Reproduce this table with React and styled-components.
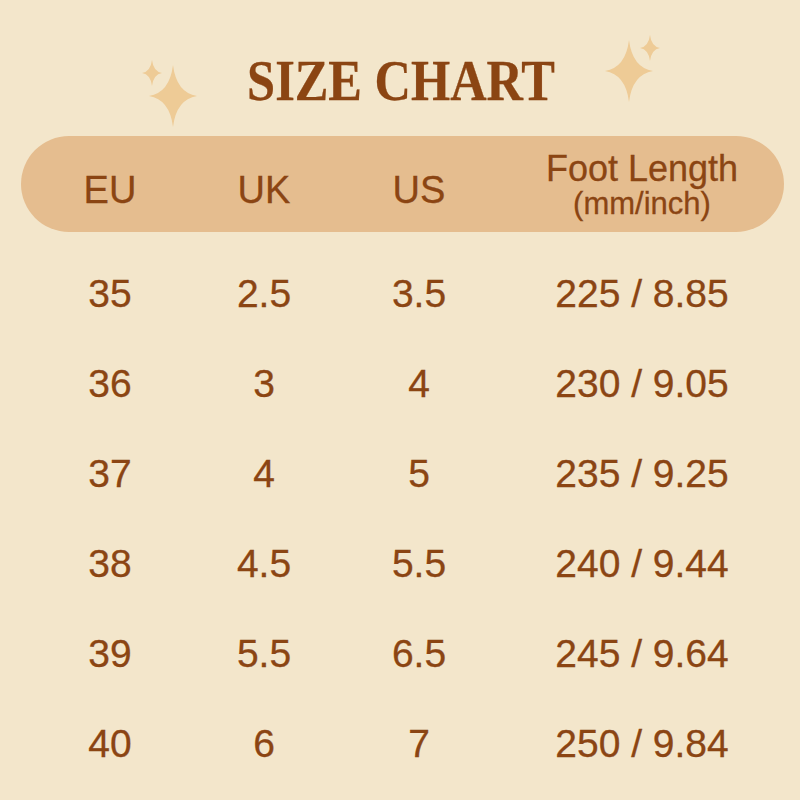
import React from "react";
import styled, { createGlobalStyle } from "styled-components";

const GlobalStyle = createGlobalStyle`
  body {
    margin: 0;
    background: #f3e6cb;
  }
`;

const sizes = [
  { eu: "35", uk: "2.5", us: "3.5", foot: "225 / 8.85" },
  { eu: "36", uk: "3", us: "4", foot: "230 / 9.05" },
  { eu: "37", uk: "4", us: "5", foot: "235 / 9.25" },
  { eu: "38", uk: "4.5", us: "5.5", foot: "240 / 9.44" },
  { eu: "39", uk: "5.5", us: "6.5", foot: "245 / 9.64" },
  { eu: "40", uk: "6", us: "7", foot: "250 / 9.84" },
];

const Page = styled.div`
  width: 800px;
  height: 800px;
  box-sizing: border-box;
  padding-top: 30px;
  background: #f3e6cb;
  color: #8b4513;
  font-family: "Liberation Sans", Arial, sans-serif;
  -webkit-text-stroke: 0.3px #8b4513;
  overflow: hidden;
`;

const TitleRow = styled.div`
  display: flex;
  height: 100px;
  padding-left: 130px;
`;

const Sparkles = styled.svg`
  width: 70px;
  height: 100px;
  flex: none;
`;

const TitleBox = styled.div`
  width: 400px;
  display: flex;
  justify-content: center;
  padding-top: 23px;
  padding-left: 2px;
  box-sizing: border-box;
`;

const Title = styled.h1`
  margin: 0;
  font-family: "Liberation Serif", "Times New Roman", serif;
  font-weight: 700;
  font-size: 56px;
  line-height: 56px;
  white-space: nowrap;
  transform: scaleX(0.9);
`;

const HeaderBar = styled.div`
  display: grid;
  grid-template-columns: 160px 148px 162px 284px;
  align-items: center;
  margin: 6px 16px 0 21px;
  padding-left: 9px;
  height: 96px;
  border-radius: 48px;
  background: #e5bd8f;
`;

const HeadLabel = styled.div`
  text-align: center;
  font-size: 38px;
  line-height: 38px;
  padding-top: 11px;
`;

const HeadStack = styled.div`
  display: flex;
  flex-direction: column;
  align-items: center;
  padding-top: 3px;
`;

const HeadLine = styled.span`
  font-size: ${(p) => p.$size}px;
  line-height: 35px;
  white-space: nowrap;
`;

const Rows = styled.div`
  margin-top: 16px;
  padding-left: 30px;
`;

const Row = styled.div`
  display: grid;
  grid-template-columns: 160px 148px 162px 284px;
  align-items: center;
  height: 90px;
`;

const Cell = styled.div`
  text-align: center;
  font-size: 39px;
  line-height: 39px;
  white-space: nowrap;
`;

const star = (cx, cy, a, b) => {
  const k = a * 0.14;
  return `M${cx} ${cy - b} Q${cx + k} ${cy - k} ${cx + a} ${cy} Q${cx + k} ${cy + k} ${cx} ${cy + b} Q${cx - k} ${cy + k} ${cx - a} ${cy} Q${cx - k} ${cy - k} ${cx} ${cy - b}Z`;
};

const Sparkle = ({ big, small }) => (
  <Sparkles viewBox="0 0 70 100">
    <path d={star(...big)} fill="#eecb96" />
    <path d={star(...small)} fill="#eecb96" />
  </Sparkles>
);

export default function App() {
  return (
    <Page>
      <GlobalStyle />
      <TitleRow>
        <Sparkle big={[43, 66, 24, 31]} small={[22, 43, 10, 13]} />
        <TitleBox>
          <Title>SIZE CHART</Title>
        </TitleBox>
        <Sparkle big={[29, 41, 24, 31]} small={[50, 18, 10, 13]} />
      </TitleRow>

      <HeaderBar>
        <HeadLabel>EU</HeadLabel>
        <HeadLabel>UK</HeadLabel>
        <HeadLabel>US</HeadLabel>
        <HeadStack>
          <HeadLine $size={36}>Foot Length</HeadLine>
          <HeadLine $size={31}>(mm/inch)</HeadLine>
        </HeadStack>
      </HeaderBar>

      <Rows>
        {sizes.map((s) => (
          <Row key={s.eu}>
            <Cell>{s.eu}</Cell>
            <Cell>{s.uk}</Cell>
            <Cell>{s.us}</Cell>
            <Cell>{s.foot}</Cell>
          </Row>
        ))}
      </Rows>
    </Page>
  );
}
